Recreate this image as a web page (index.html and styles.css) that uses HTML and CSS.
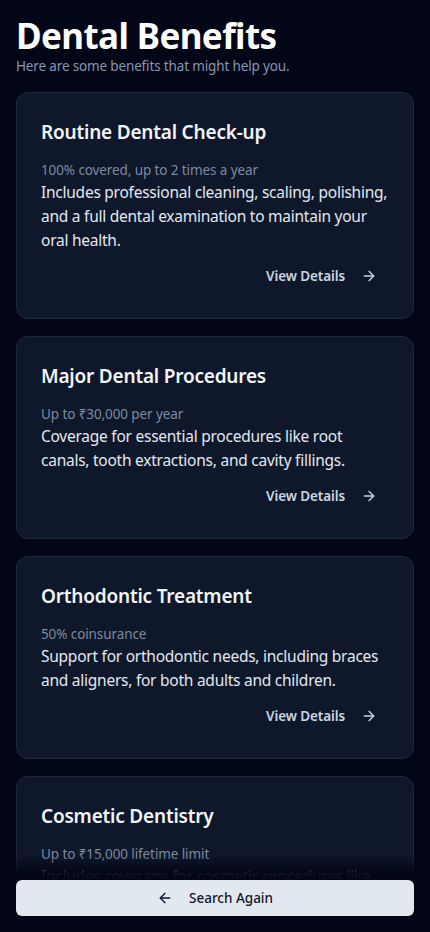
FILE: index.html
```html
<!DOCTYPE html>
<html lang="en">
<head>
<meta charset="utf-8">
<meta name="viewport" content="width=device-width, initial-scale=1">
<title>Dental Benefits</title>
<link rel="stylesheet" href="styles.css">
</head>
<body>
<main class="page">
  <header class="header">
    <h1 class="title">Dental Benefits</h1>
    <p class="subtitle">Here are some benefits that might help you.</p>
  </header>
  <section class="list">
    <article class="card">
      <h2 class="card-title">Routine Dental Check-up</h2>
      <p class="card-meta">100% covered, up to 2 times a year</p>
      <p class="card-desc">Includes professional cleaning, scaling, polishing, and a full dental examination to maintain your oral health.</p>
      <div class="card-actions">
        <button class="link-btn">View Details
          <svg class="icon" viewBox="0 0 24 24" fill="none" stroke="currentColor" stroke-width="2" stroke-linecap="round" stroke-linejoin="round"><path d="M5 12h14"/><path d="m12 5 7 7-7 7"/></svg>
        </button>
      </div>
    </article>
    <article class="card">
      <h2 class="card-title">Major Dental Procedures</h2>
      <p class="card-meta">Up to ₹30,000 per year</p>
      <p class="card-desc">Coverage for essential procedures like root canals, tooth extractions, and cavity fillings.</p>
      <div class="card-actions">
        <button class="link-btn">View Details
          <svg class="icon" viewBox="0 0 24 24" fill="none" stroke="currentColor" stroke-width="2" stroke-linecap="round" stroke-linejoin="round"><path d="M5 12h14"/><path d="m12 5 7 7-7 7"/></svg>
        </button>
      </div>
    </article>
    <article class="card">
      <h2 class="card-title">Orthodontic Treatment</h2>
      <p class="card-meta">50% coinsurance</p>
      <p class="card-desc">Support for orthodontic needs, including braces and aligners, for both adults and children.</p>
      <div class="card-actions">
        <button class="link-btn">View Details
          <svg class="icon" viewBox="0 0 24 24" fill="none" stroke="currentColor" stroke-width="2" stroke-linecap="round" stroke-linejoin="round"><path d="M5 12h14"/><path d="m12 5 7 7-7 7"/></svg>
        </button>
      </div>
    </article>
    <article class="card">
      <h2 class="card-title">Cosmetic Dentistry</h2>
      <p class="card-meta">Up to ₹15,000 lifetime limit</p>
      <p class="card-desc">Includes coverage for cosmetic procedures like teeth whitening, veneers, and bonding.</p>
      <div class="card-actions">
        <button class="link-btn">View Details
          <svg class="icon" viewBox="0 0 24 24" fill="none" stroke="currentColor" stroke-width="2" stroke-linecap="round" stroke-linejoin="round"><path d="M5 12h14"/><path d="m12 5 7 7-7 7"/></svg>
        </button>
      </div>
    </article>
  </section>
</main>
<footer class="footer">
  <button class="primary-btn">
    <svg class="icon" viewBox="0 0 24 24" fill="none" stroke="currentColor" stroke-width="2" stroke-linecap="round" stroke-linejoin="round"><path d="m12 19-7-7 7-7"/><path d="M19 12H5"/></svg>
    Search Again
  </button>
</footer>
</body>
</html>
```

FILE: styles.css
```css
* { box-sizing: border-box; }
html, body { margin: 0; padding: 0; }
body {
  background: #020617;
  color: #f8fafc;
  font-family: "Noto Sans", "Open Sans", sans-serif;
}
.page {
  padding: 16px 16px 120px;
}
.header { margin-bottom: 16px; }
.title {
  margin: 0;
  font-size: 35px;
  line-height: 40px;
  font-weight: 700;
  color: #ffffff;
  letter-spacing: -0.6px;
}
.subtitle {
  margin: 0;
  font-size: 13.5px;
  line-height: 20px;
  color: #8696b0;
  letter-spacing: -0.15px;
}
.list {
  display: flex;
  flex-direction: column;
  gap: 17px;
}
.card {
  background: #0f172a;
  border: 1px solid #1e293b;
  border-radius: 12px;
  padding: 24px;
  display: flex;
  flex-direction: column;
}
.card-title {
  margin: 1px 0 14px;
  font-size: 19px;
  line-height: 28px;
  font-weight: 600;
  color: #f1f5f9;
  letter-spacing: -0.2px;
}
.card-meta {
  margin: 0;
  font-size: 13.5px;
  line-height: 20px;
  color: #7d8aa0;
  letter-spacing: -0.1px;
}
.card-desc {
  margin: 0;
  font-size: 15.5px;
  line-height: 24px;
  color: #e2e8f0;
  letter-spacing: -0.25px;
}
.card-actions {
  display: flex;
  justify-content: flex-end;
  margin-top: 6px;
}
.link-btn {
  display: inline-flex;
  align-items: center;
  gap: 16px;
  height: 36px;
  padding: 0 12px;
  border: 0;
  background: transparent;
  color: #cbd5e1;
  font-family: inherit;
  font-size: 13.5px;
  font-weight: 600;
  letter-spacing: -0.1px;
  cursor: pointer;
}
.icon { width: 16px; height: 16px; flex: none; }
.footer {
  position: fixed;
  left: 0;
  right: 0;
  bottom: 0;
  padding: 24px 16px 16px;
  background: linear-gradient(to bottom, rgba(2,6,23,0) 0px, rgba(2,6,23,0.9) 16px, #020617 24px);
}
.primary-btn {
  width: 100%;
  height: 36px;
  display: flex;
  align-items: center;
  justify-content: center;
  gap: 16px;
  border: 0;
  border-radius: 6px;
  background: #e2e8f0;
  color: #0f172a;
  font-family: inherit;
  font-size: 13.5px;
  font-weight: 500;
  cursor: pointer;
}
```
